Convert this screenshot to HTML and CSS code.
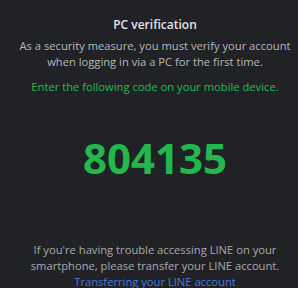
FILE: index.html
```html
<!DOCTYPE html>
<html>
<head>
<meta charset="utf-8">
<link rel="stylesheet" href="styles.css">
</head>
<body>
<div class="page">
  <h1 class="title">PC verification</h1>
  <p class="desc">As a security measure, you must verify your account when logging in via a PC for the first time.</p>
  <p class="hint">Enter the following code on your mobile device.</p>
  <div class="code">804135</div>
  <p class="help">If you're having trouble accessing LINE on your smartphone, please transfer your LINE account.</p>
  <a class="link" href="#">Transferring your LINE account</a>
</div>
</body>
</html>
```
FILE: styles.css
```css
html, body {
  margin: 0;
  padding: 0;
  background: #212226;
  width: 298px;
  height: 288px;
  overflow: hidden;
}
.page {
  display: flex;
  flex-direction: column;
  align-items: center;
  text-align: center;
  font-family: "Open Sans", sans-serif;
  padding: 17px 2px 0 14px;
}
.title {
  margin: 0;
  font-size: 12px;
  font-weight: 600;
  color: #e2e2e2;
  line-height: 16px;
}
.desc {
  margin: 5px 0 0;
  font-size: 11.2px;
  line-height: 16px;
  color: #b7b7b7;
}
.hint {
  margin: 9px 0 0;
  font-size: 11.2px;
  line-height: 16px;
  color: #1fbf4e;
}
.code {
  margin-top: 40px;
  font-size: 42px;
  font-weight: 700;
  line-height: 46px;
  color: #22b84d;
}
.help {
  margin: 61px 0 0;
  font-size: 11.2px;
  line-height: 16px;
  color: #a9a9a9;
}
.link {
  font-size: 11.2px;
  line-height: 15px;
  color: #4a78e0;
  text-decoration: none;
}
```
